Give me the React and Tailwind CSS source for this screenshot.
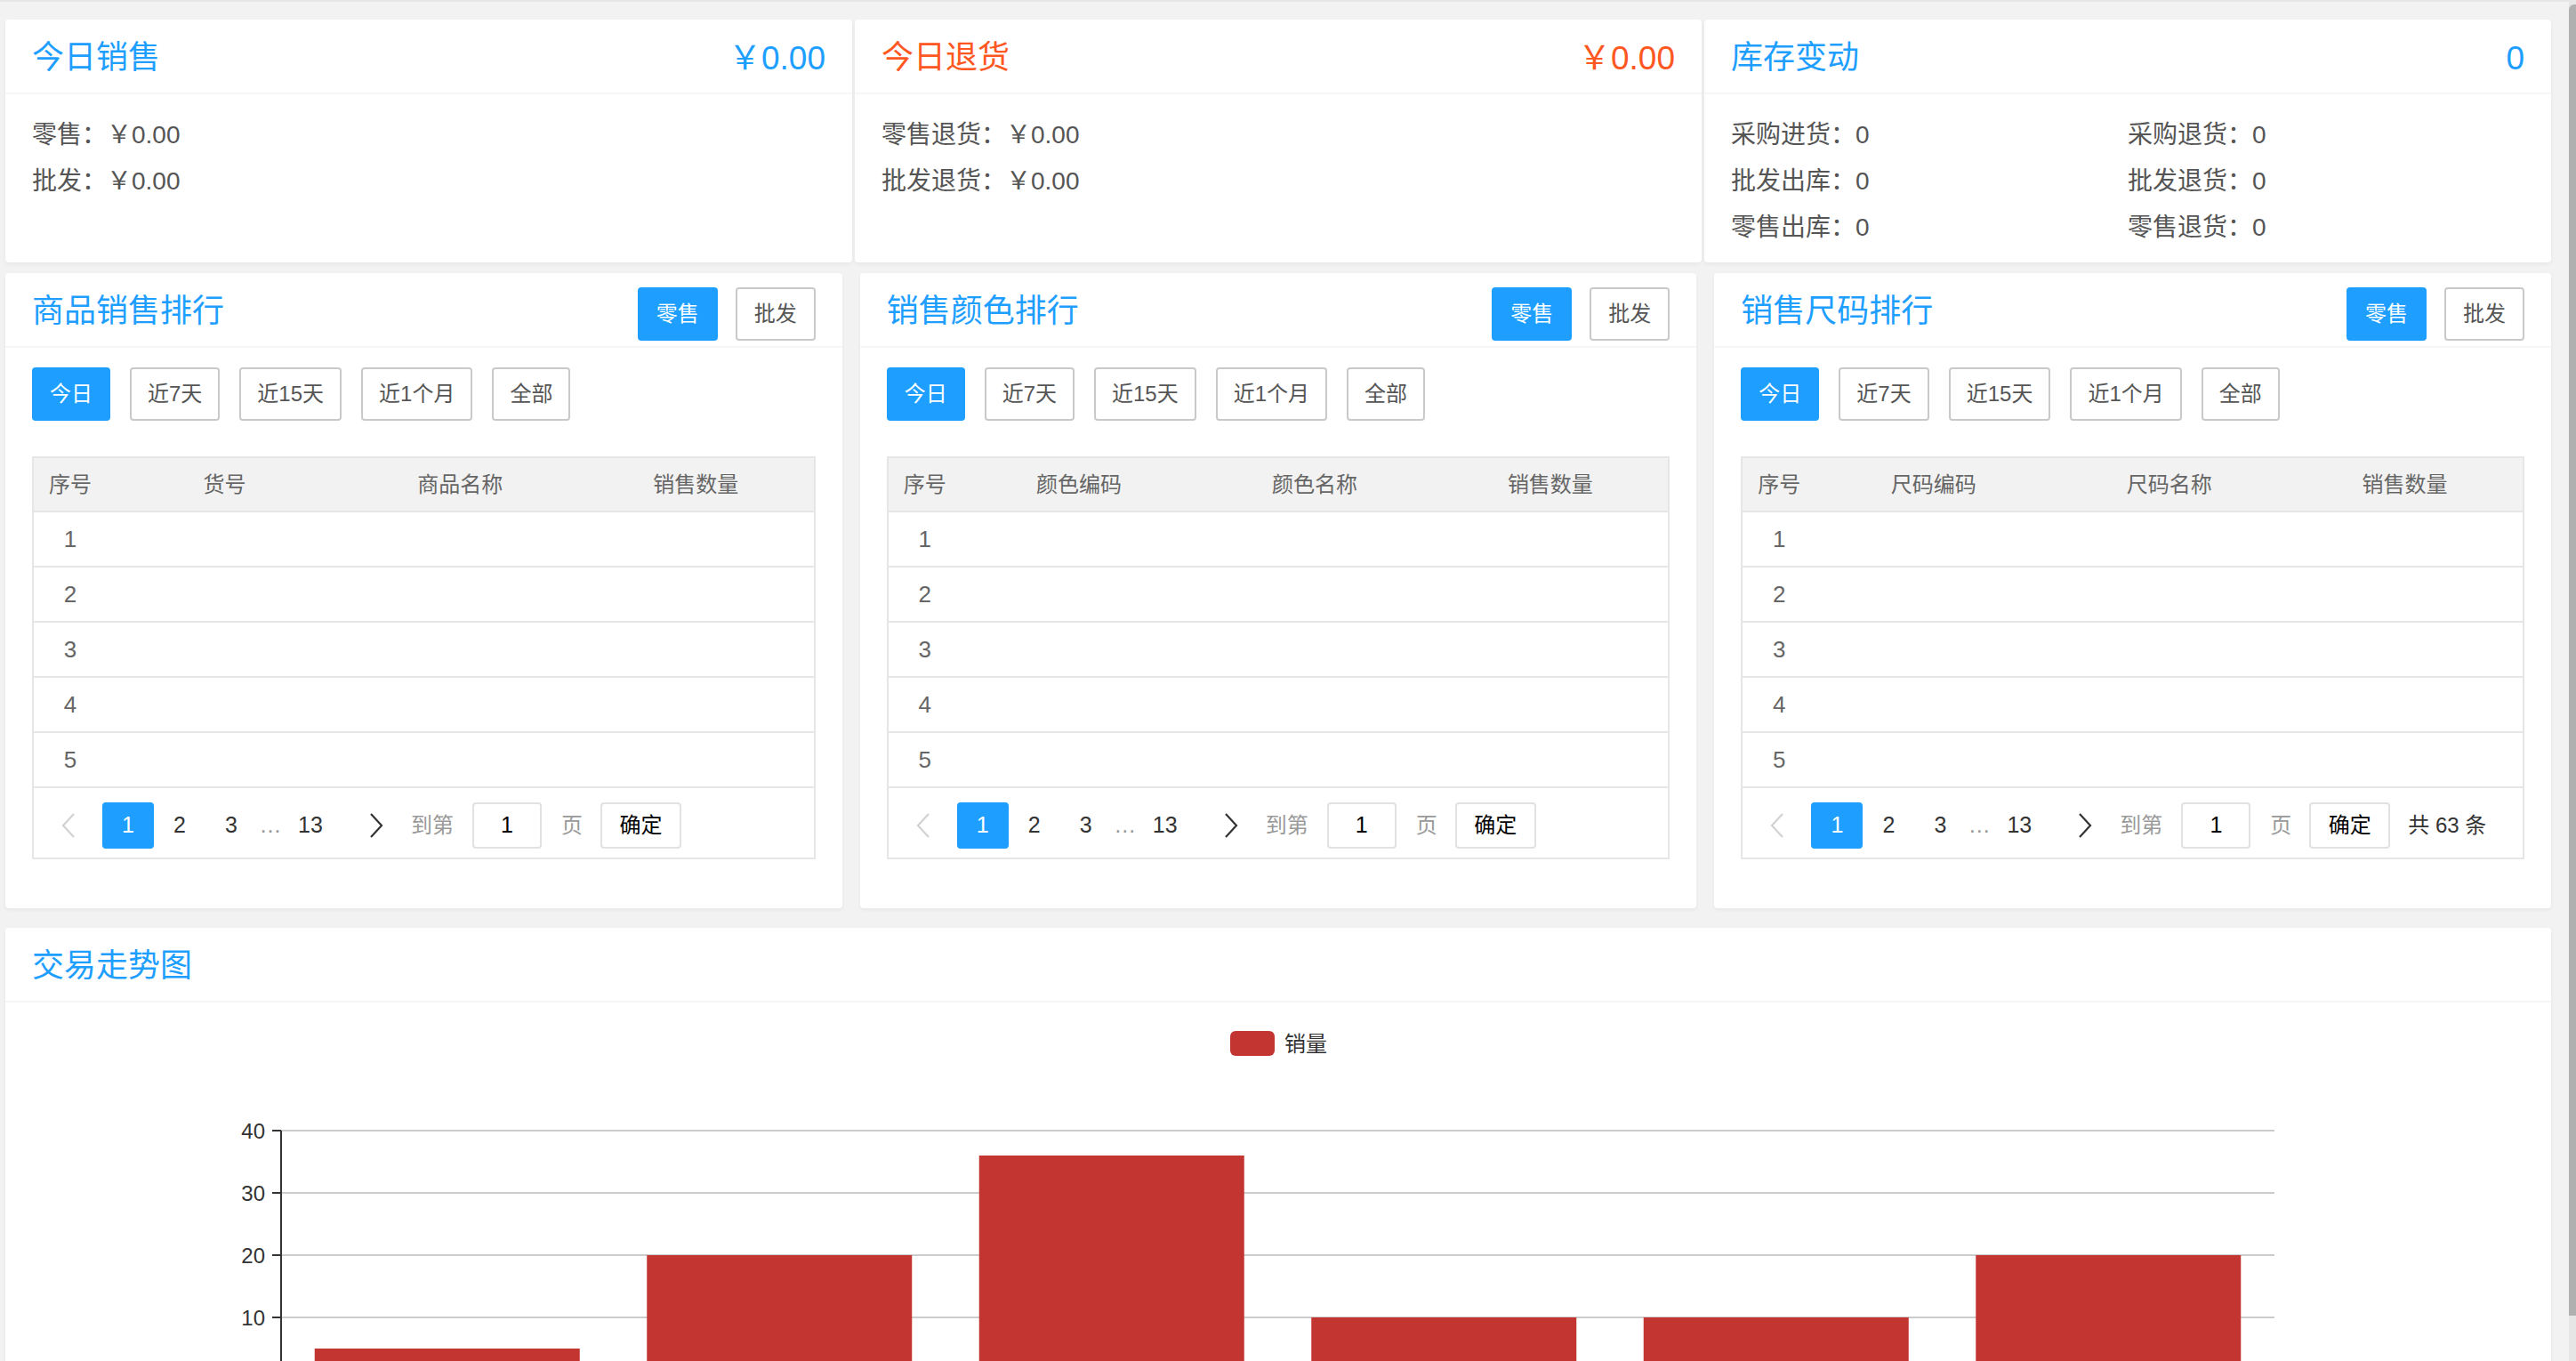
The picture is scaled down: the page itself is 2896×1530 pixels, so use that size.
import React from 'react';

const blue = '#1e9fff';

const rankCards = [
    { title: '商品销售排行', cols: ['序号', '货号', '商品名称', '销售数量'], total: null },
    { title: '销售颜色排行', cols: ['序号', '颜色编码', '颜色名称', '销售数量'], total: null },
    { title: '销售尺码排行', cols: ['序号', '尺码编码', '尺码名称', '销售数量'], total: '共 63 条' },
];

const ranges = ['今日', '近7天', '近15天', '近1个月', '全部'];
const bars = [5, 20, 36, 10, 10, 20];

const Card = ({ className = '', children }) => (
    <div className={`bg-white rounded-[4px] shadow-[0_2px_4px_rgba(0,0,0,0.05)] ${className}`}>{children}</div>
);

const CardHeader = ({ children }) => (
    <div className="h-[84px] border-b-2 border-[#f6f6f6] px-[30px] flex items-center justify-between leading-none pt-[4px]">{children}</div>
);

const SmallBtn = ({ active, children, className = 'px-[18px]' }) => (
    <div
        className={`h-[60px] rounded-[4px] border-2 flex items-center justify-center text-[24px] ${className} ${
            active ? 'bg-[#1e9fff] border-[#1e9fff] text-white' : 'bg-white border-[#c9c9c9] text-[#555]'
        }`}
    >
        {children}
    </div>
);

const Chevron = ({ dir, color }) => (
    <svg width="16" height="28" viewBox="0 0 16 28">
        <polyline
            points={dir === 'left' ? '14,1 2,14 14,27' : '2,1 14,14 2,27'}
            fill="none"
            stroke={color}
            strokeWidth="2.2"
        />
    </svg>
);

const Pager = ({ total }) => (
    <div className="h-[78px] flex items-center text-[25px] text-[#333] pt-[5px]">
        <div className="ml-[11px] w-[56px] flex justify-center"><Chevron dir="left" color="#d2d2d2" /></div>
        <div className="ml-[10px] w-[58px] h-[52px] rounded-[4px] bg-[#1e9fff] text-white flex items-center justify-center">1</div>
        <div className="w-[58px] text-center">2</div>
        <div className="w-[58px] text-center">3</div>
        <div className="w-[30px] text-center text-[#999]">…</div>
        <div className="w-[60px] text-center">13</div>
        <div className="ml-[14px] w-[60px] flex justify-center"><Chevron dir="right" color="#333" /></div>
        <div className="ml-[9px] text-[#999] text-[24px]">到第</div>
        <div className="ml-[21px] w-[78px] h-[52px] border-2 border-[#e2e2e2] rounded-[4px] flex items-center justify-center text-black">1</div>
        <div className="ml-[22px] text-[#999] text-[24px]">页</div>
        <div className="ml-[20px] w-[91px] h-[52px] border-2 border-[#e2e2e2] rounded-[4px] flex items-center justify-center text-black text-[24px]">确定</div>
        {total && <div className="ml-[20px] text-[24px]">{total}</div>}
    </div>
);

const RankCard = ({ title, cols, total }) => (
    <Card className="pb-[55px]">
        <div className="h-[84px] border-b-2 border-[#f6f6f6] px-[30px] flex items-center justify-between">
            <span className="text-[36px] text-[#1e9fff] leading-none pt-[4px]">{title}</span>
            <div className="flex gap-[20px] pt-[9px]">
                <SmallBtn active className="px-[19px]">零售</SmallBtn>
                <SmallBtn className="px-[19px]">批发</SmallBtn>
            </div>
        </div>
        <div className="px-[30px] pt-[22px]">
            <div className="flex gap-[22px]">
                {ranges.map((r, i) => (
                    <SmallBtn key={r} active={i === 0}>{r}</SmallBtn>
                ))}
            </div>
            <div className="mt-[40px] border-2 border-[#e6e6e6]">
                <div className="h-[61px] bg-[#f2f2f2] border-b-2 border-[#e6e6e6] grid grid-cols-[82px_1fr_1fr_1fr] items-center text-[24px] text-[#666]">
                    {cols.map(c => (
                        <div key={c} className="text-center">{c}</div>
                    ))}
                </div>
                {[1, 2, 3, 4, 5].map(n => (
                    <div key={n} className="h-[62px] border-b-2 border-[#e6e6e6] grid grid-cols-[82px_1fr_1fr_1fr] items-center text-[26px] text-[#666]">
                        <div className="text-center">{n}</div>
                        <div />
                        <div />
                        <div />
                    </div>
                ))}
                <Pager total={total} />
            </div>
        </div>
    </Card>
);

const SummaryCard = ({ title, value, color, children }) => (
    <Card>
        <CardHeader>
            <span className="text-[36px]" style={{ color }}>{title}</span>
            <span className="text-[37px]" style={{ color }}>{value}</span>
        </CardHeader>
        <div className="px-[30px] pt-[20px] pb-[13px] text-[28px] leading-[52px] text-[#555]">{children}</div>
    </Card>
);

const Chart = () => {
    const left = 310;
    const right = 2551;
    const base = 424;
    const step = (right - left) / bars.length;
    return (
        <svg width="2862" height="480" className="block">
            <rect x="1377" y="32" width="50" height="28" rx="6" fill="#c23531" />
            <text x="1438" y="46" fontSize="24" fill="#333" dominantBaseline="central">销量</text>
            {[40, 30, 20, 10].map(v => {
                const y = base - v * 7;
                return (
                    <g key={v}>
                        <line x1={left} x2={right} y1={y} y2={y} stroke="#cccccc" strokeWidth="2" />
                        <line x1={left - 10} x2={left} y1={y} y2={y} stroke="#333" strokeWidth="2" />
                        <text x="292" y={y} fontSize="24" fill="#333" textAnchor="end" dominantBaseline="central">{v}</text>
                    </g>
                );
            })}
            {bars.map((v, i) => (
                <rect key={i} x={left + i * step + (step - 298) / 2} y={base - v * 7} width="298" height={v * 7} fill="#c23531" />
            ))}
            <line x1={left} x2={left} y1={base - 280} y2={base} stroke="#333" strokeWidth="2" />
            <line x1={left} x2={right} y1={base} y2={base} stroke="#333" strokeWidth="2" />
        </svg>
    );
};

export default function App() {
    return (
        <div className="relative h-[1530px] overflow-hidden bg-[#f2f2f2] border-t-2 border-[#e6e6e6] pl-[6px] pr-[28px] pt-[20px] font-['Liberation_Sans','Noto_Sans_CJK_SC',sans-serif]">
            <div className="grid grid-cols-3 gap-[3px]">
                <SummaryCard title="今日销售" value="￥0.00" color={blue}>
                    <div>零售：￥0.00</div>
                    <div>批发：￥0.00</div>
                </SummaryCard>
                <SummaryCard title="今日退货" value="￥0.00" color="#ff5722">
                    <div>零售退货：￥0.00</div>
                    <div>批发退货：￥0.00</div>
                </SummaryCard>
                <SummaryCard title="库存变动" value="0" color={blue}>
                    <div className="grid grid-cols-2">
                        <div>采购进货：0</div>
                        <div>采购退货：0</div>
                        <div>批发出库：0</div>
                        <div>批发退货：0</div>
                        <div>零售出库：0</div>
                        <div>零售退货：0</div>
                    </div>
                </SummaryCard>
            </div>

            <div className="mt-[12px] grid grid-cols-3 gap-[20px]">
                {rankCards.map(c => (
                    <RankCard key={c.title} {...c} />
                ))}
            </div>

            <Card className="mt-[22px]">
                <div className="h-[84px] border-b-2 border-[#f6f6f6] px-[30px] flex items-center">
                    <span className="text-[36px] text-[#1e9fff] leading-none pt-[4px]">交易走势图</span>
                </div>
                <Chart />
            </Card>

            <div className="absolute right-0 top-0 bottom-0 w-[8px] bg-[#e6e6e6]" />
            <div className="absolute right-0 top-[3px] h-[1474px] w-[8px] rounded-tl-[6px] bg-[#b0b0b0]" />
        </div>
    );
}
